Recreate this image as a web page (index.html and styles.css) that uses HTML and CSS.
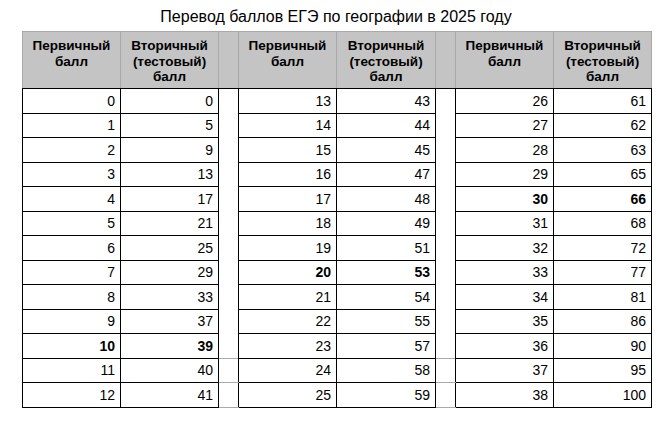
FILE: index.html
```html
<!DOCTYPE html>
<html lang="ru">
<head>
<meta charset="utf-8">
<title>Перевод баллов ЕГЭ по географии в 2025 году</title>
<link rel="stylesheet" href="styles.css">
</head>
<body>
<div class="title">Перевод баллов ЕГЭ по географии в 2025 году</div>
<table class="scores">
<colgroup>
<col class="c-num"><col class="c-num"><col class="c-gap"><col class="c-num"><col class="c-num2"><col class="c-gap"><col class="c-num"><col class="c-num">
</colgroup>
<thead>
<tr>
<th>Первичный<br>балл</th><th>Вторичный<br>(тестовый)<br>балл</th><th class="gap"></th>
<th>Первичный<br>балл</th><th>Вторичный<br>(тестовый)<br>балл</th><th class="gap"></th>
<th>Первичный<br>балл</th><th>Вторичный<br>(тестовый)<br>балл</th>
</tr>
</thead>
<tbody>
<tr><td>0</td><td>0</td><td class="gap"></td><td>13</td><td>43</td><td class="gap"></td><td>26</td><td>61</td></tr>
<tr><td>1</td><td>5</td><td class="gap"></td><td>14</td><td>44</td><td class="gap"></td><td>27</td><td>62</td></tr>
<tr><td>2</td><td>9</td><td class="gap"></td><td>15</td><td>45</td><td class="gap"></td><td>28</td><td>63</td></tr>
<tr><td>3</td><td>13</td><td class="gap"></td><td>16</td><td>47</td><td class="gap"></td><td>29</td><td>65</td></tr>
<tr><td>4</td><td>17</td><td class="gap"></td><td>17</td><td>48</td><td class="gap"></td><td class="b">30</td><td class="b">66</td></tr>
<tr><td>5</td><td>21</td><td class="gap"></td><td>18</td><td>49</td><td class="gap"></td><td>31</td><td>68</td></tr>
<tr><td>6</td><td>25</td><td class="gap"></td><td>19</td><td>51</td><td class="gap"></td><td>32</td><td>72</td></tr>
<tr><td>7</td><td>29</td><td class="gap"></td><td class="b">20</td><td class="b">53</td><td class="gap"></td><td>33</td><td>77</td></tr>
<tr><td>8</td><td>33</td><td class="gap"></td><td>21</td><td>54</td><td class="gap"></td><td>34</td><td>81</td></tr>
<tr><td>9</td><td>37</td><td class="gap"></td><td>22</td><td>55</td><td class="gap"></td><td>35</td><td>86</td></tr>
<tr><td class="b">10</td><td class="b">39</td><td class="gap"></td><td>23</td><td>57</td><td class="gap"></td><td>36</td><td>90</td></tr>
<tr><td>11</td><td>40</td><td class="gap ruled"></td><td>24</td><td>58</td><td class="gap ruled"></td><td>37</td><td>95</td></tr>
<tr><td>12</td><td>41</td><td class="gap ruled"></td><td>25</td><td>59</td><td class="gap ruled"></td><td>38</td><td>100</td></tr>
</tbody>
</table>
</body>
</html>
```

FILE: styles.css
```css
html, body {
  margin: 0;
  padding: 0;
  background: #ffffff;
}

body {
  font-family: "Liberation Sans", Arial, sans-serif;
  color: #000000;
}

.title {
  height: 31px;
  box-sizing: border-box;
  padding-top: 7px;
  text-align: center;
  font-size: 16px;
  line-height: 19px;
}

.scores {
  margin-left: 22px;
  border-collapse: collapse;
  table-layout: fixed;
  width: 630px;
}

.c-num { width: 98px; }
.c-num2 { width: 99px; }
.c-gap { width: 20px; }

.scores th {
  background: #c4c4c4;
  border: 1px solid #a9a9a9;
  border-bottom: 1px solid #000000;
  height: 57px;
  box-sizing: border-box;
  padding: 6px 2px 0;
  vertical-align: top;
  text-align: center;
  font-size: 13.5px;
  line-height: 15.5px;
  font-weight: bold;
}

.scores td {
  border: 1px solid #000000;
  height: 24.5px;
  box-sizing: border-box;
  padding: 0 5px 0 3px;
  text-align: right;
  vertical-align: middle;
  font-size: 14px;
  line-height: 16px;
}

.scores td.gap {
  border-top: none;
  border-bottom: none;
  padding: 0;
}

.scores td.gap.ruled {
  border-top: 1px solid #a9a9a9;
  border-bottom: 1px solid #a9a9a9;
}

.scores td.b {
  font-weight: bold;
}
```
